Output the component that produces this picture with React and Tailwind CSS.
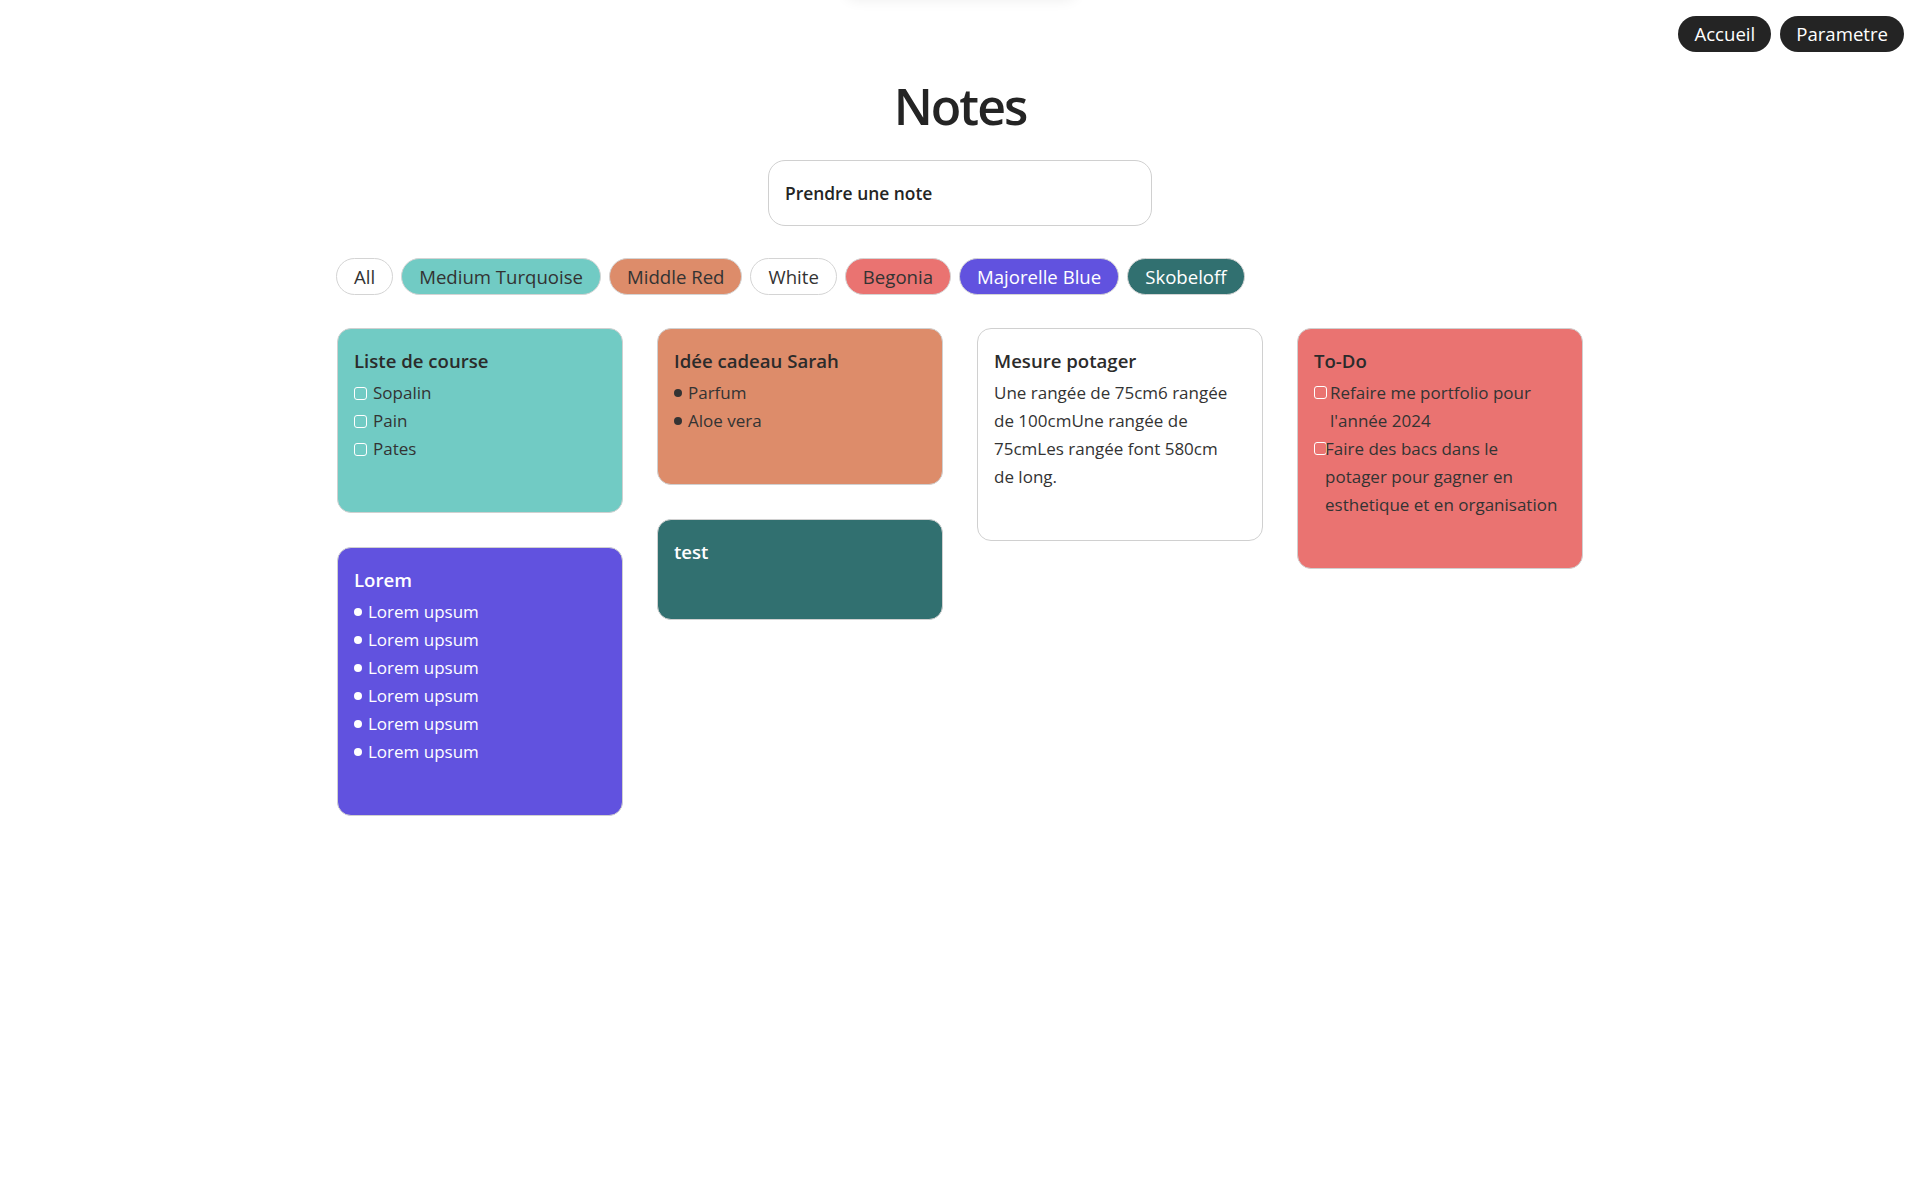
import React from "react";

const FONT = { fontFamily: "'Open Sans', 'Noto Sans', sans-serif" };

function Chip({ label, cls }) {
  return (
    <div className={`h-[37px] px-[17px] rounded-full border border-[#d4d4d4] flex items-center text-[18.6px] ${cls}`}>
      {label}
    </div>
  );
}

function Check({ className = "" }) {
  return <span className={`inline-block w-[13px] h-[13px] shrink-0 border border-white rounded-[3px] ${className}`} />;
}

function Card({ bg, title, titleCls = "text-[#2b2b2b]", border = "border-[#d0d0d0]", children }) {
  return (
    <div className={`rounded-[14px] border ${border} ${bg} px-[16px] pt-[16px] pb-[49px]`}>
      <div className={`text-[18.6px] font-semibold leading-[31px] mb-[3px] ${titleCls}`}>{title}</div>
      {children}
    </div>
  );
}

function CheckItem({ children }) {
  return (
    <div className="flex items-center gap-[6px] leading-[28px] text-[17px] text-[#333]">
      <Check />
      <span>{children}</span>
    </div>
  );
}

function Bullet({ children, dark = true }) {
  return (
    <div className={`flex items-center leading-[28px] text-[17px] ${dark ? "text-[#333]" : "text-white"}`}>
      <span className={`inline-block w-[8px] h-[8px] rounded-full mr-[6px] ${dark ? "bg-[#333]" : "bg-white"}`} />
      <span>{children}</span>
    </div>
  );
}

export default function App() {
  return (
    <div className="relative min-h-screen bg-white overflow-hidden" style={FONT}>
      <div className="absolute top-[-40px] left-[845px] w-[232px] h-[40px] rounded-[12px] shadow-[0_0_14px_rgba(0,0,0,0.07)]" />
      <div className="flex justify-end gap-[9px] pt-[16px] pr-[16px]">
        <button className="h-[36px] px-[16px] rounded-full bg-[#242424] text-white text-[18.6px]">Accueil</button>
        <button className="h-[36px] px-[16px] rounded-full bg-[#242424] text-white text-[18.6px]">Parametre</button>
      </div>
      <div className="w-[1246px] mx-auto">
        <h1 className="text-center text-[50px] leading-[56px] font-semibold tracking-[-2px] text-[#242424] mt-[26px]">Notes</h1>
        <div className="flex justify-center mt-[26px]">
          <div className="w-[384px] h-[66px] rounded-[17px] border border-[#d0d0d0] flex items-center px-[16px] text-[17.4px] font-semibold text-[#242424]">
            Prendre une note
          </div>
        </div>
        <div className="flex gap-[8px] mt-[32px] ml-[-1px] text-[#333]">
          <Chip label="All" cls="bg-white" />
          <Chip label="Medium Turquoise" cls="bg-[#71cbc4]" />
          <Chip label="Middle Red" cls="bg-[#dd8c6a]" />
          <Chip label="White" cls="bg-white" />
          <Chip label="Begonia" cls="bg-[#ea7371]" />
          <Chip label="Majorelle Blue" cls="bg-[#6152df] text-white" />
          <Chip label="Skobeloff" cls="bg-[#317070] text-white" />
        </div>
        <div className="grid grid-cols-4 gap-x-[34px] mt-[33px] items-start">
          <div className="flex flex-col gap-[34px]">
            <Card bg="bg-[#71cbc4]" title="Liste de course">
              <div className="flex flex-col">
                <CheckItem>Sopalin</CheckItem>
                <CheckItem>Pain</CheckItem>
                <CheckItem>Pates</CheckItem>
              </div>
            </Card>
            <Card bg="bg-[#6152df]" title="Lorem" titleCls="text-white">
              <div className="flex flex-col">
                <Bullet dark={false}>Lorem upsum</Bullet>
                <Bullet dark={false}>Lorem upsum</Bullet>
                <Bullet dark={false}>Lorem upsum</Bullet>
                <Bullet dark={false}>Lorem upsum</Bullet>
                <Bullet dark={false}>Lorem upsum</Bullet>
                <Bullet dark={false}>Lorem upsum</Bullet>
              </div>
            </Card>
          </div>
          <div className="flex flex-col gap-[34px]">
            <Card bg="bg-[#dd8c6a]" title="Idée cadeau Sarah">
              <div className="flex flex-col">
                <Bullet>Parfum</Bullet>
                <Bullet>Aloe vera</Bullet>
              </div>
            </Card>
            <Card bg="bg-[#317070]" title="test" titleCls="text-white" />
          </div>
          <div className="flex flex-col gap-[34px]">
            <Card bg="bg-white" title="Mesure potager">
              <div className="text-[17px] leading-[28px] text-[#333] whitespace-nowrap">
                Une rangée de 75cm6 rangée
                <br />
                de 100cmUne rangée de
                <br />
                75cmLes rangée font 580cm
                <br />
                de long.
              </div>
            </Card>
          </div>
          <div className="flex flex-col gap-[34px]">
            <Card bg="bg-[#ea7371]" title="To-Do">
              <div className="flex flex-col text-[17px] leading-[28px] text-[#333] whitespace-nowrap">
                <div className="flex items-start">
                  <Check className="mt-[7px]" />
                  <span className="ml-[3px]">
                    Refaire me portfolio pour
                    <br />
                    l'année 2024
                  </span>
                </div>
                <div className="flex items-start">
                  <Check className="mt-[7px]" />
                  <span className="ml-[-2px]">
                    Faire des bacs dans le
                    <br />
                    potager pour gagner en
                    <br />
                    esthetique et en organisation
                  </span>
                </div>
              </div>
            </Card>
          </div>
        </div>
      </div>
    </div>
  );
}
